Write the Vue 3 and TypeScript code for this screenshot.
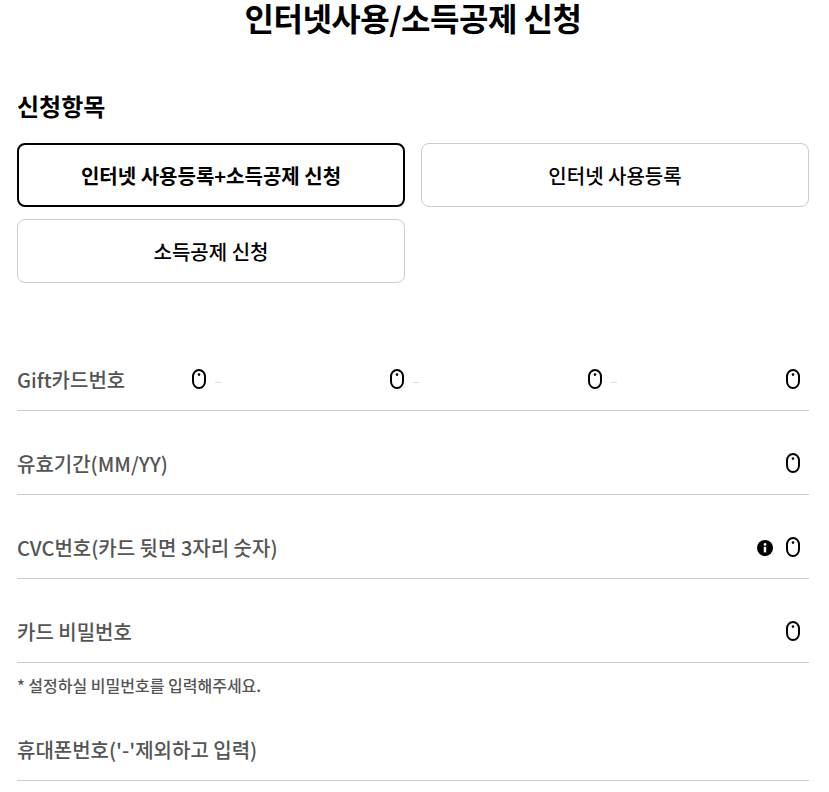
<script setup lang="ts">
const options = ['인터넷 사용등록+소득공제 신청', '인터넷 사용등록', '소득공제 신청']
</script>

<template>
  <main class="page">
    <h1 class="title">인터넷사용/소득공제 신청</h1>
    <h2 class="subtitle">신청항목</h2>
    <div class="options">
      <button v-for="(o, i) in options" :key="o" class="option" :class="{ active: i === 0 }">{{ o }}</button>
    </div>
    <section class="form">
      <div class="row">
        <span class="label">Gift카드번호</span>
        <div class="cells">
          <template v-for="n in 4" :key="n">
            <div class="cell">
              <svg class="dot-icon" viewBox="0 0 14 20" aria-hidden="true">
                <rect x="1" y="1" width="12" height="18" rx="6" ry="6.5" fill="none" stroke="#000" stroke-width="2" />
                <circle cx="7" cy="5.6" r="1.3" fill="#000" />
              </svg>
            </div>
            <span v-if="n < 4" class="dash"></span>
          </template>
        </div>
      </div>
      <div class="row">
        <span class="label">유효기간(MM/YY)</span>
        <svg class="dot-icon end" viewBox="0 0 14 20" aria-hidden="true">
          <rect x="1" y="1" width="12" height="18" rx="6" ry="6.5" fill="none" stroke="#000" stroke-width="2" />
          <circle cx="7" cy="5.6" r="1.3" fill="#000" />
        </svg>
      </div>
      <div class="row">
        <span class="label">CVC번호(카드 뒷면 3자리 숫자)</span>
        <svg class="info" viewBox="0 0 16 16" aria-hidden="true">
          <circle cx="8" cy="8" r="8" fill="#000" />
          <rect x="6.8" y="6.8" width="2.4" height="5.6" fill="#fff" />
          <circle cx="8" cy="4.4" r="1.4" fill="#fff" />
        </svg>
        <svg class="dot-icon" viewBox="0 0 14 20" aria-hidden="true">
          <rect x="1" y="1" width="12" height="18" rx="6" ry="6.5" fill="none" stroke="#000" stroke-width="2" />
          <circle cx="7" cy="5.6" r="1.3" fill="#000" />
        </svg>
      </div>
      <div class="row">
        <span class="label">카드 비밀번호</span>
        <svg class="dot-icon end" viewBox="0 0 14 20" aria-hidden="true">
          <rect x="1" y="1" width="12" height="18" rx="6" ry="6.5" fill="none" stroke="#000" stroke-width="2" />
          <circle cx="7" cy="5.6" r="1.3" fill="#000" />
        </svg>
      </div>
      <p class="note">* 설정하실 비밀번호를 입력해주세요.</p>
      <div class="row last">
        <span class="label">휴대폰번호('-'제외하고 입력)</span>
      </div>
    </section>
  </main>
</template>

<style>
html, body { background: #fff; }
</style>

<style scoped>
.page {
  box-sizing: border-box;
  width: 829px;
  height: 792px;
  overflow: hidden;
  padding: 0 20px 0 17px;
  font-family: "Noto Sans CJK KR", "Noto Sans", sans-serif;
  color: #000;
}
.title {
  margin: 0;
  height: 38px;
  padding-bottom: 4px;
  box-sizing: border-box;
  line-height: 34px;
  font-size: 32px;
  font-weight: 700;
  letter-spacing: -0.5px;
  text-align: center;
}
.subtitle {
  margin: 52px 0 0;
  height: 32px;
  line-height: 32px;
  font-size: 24px;
  font-weight: 700;
}
.options {
  display: grid;
  grid-template-columns: 1fr 1fr;
  gap: 12px 16px;
  margin-top: 21px;
}
.option {
  box-sizing: border-box;
  height: 64px;
  border: 1px solid #ccc;
  border-radius: 8px;
  background: #fff;
  font: 500 20px "Noto Sans CJK KR", sans-serif;
  color: #000;
}
.option.active {
  border: 2px solid #000;
  font-weight: 700;
}
.form { margin-top: 44px; }
.row {
  box-sizing: border-box;
  display: flex;
  align-items: center;
  height: 84px;
  padding-top: 26px;
  padding-bottom: 4px;
  border-bottom: 1px solid #ccc;
}
.label {
  flex: none;
  font-size: 20px;
  font-weight: 500;
  color: #555;
  line-height: 28px;
}
.cells {
  flex: 1;
  display: flex;
  align-items: center;
}
.cell {
  flex: none;
  width: 192px;
  display: flex;
  justify-content: flex-end;
  padding-right: 9px;
  box-sizing: border-box;
}
.cell:first-child { flex: 1; width: auto; }
.dot-icon {
  flex: none;
  width: 14px;
  height: 20px;
  margin-top: -1px;
}
.dot-icon.end { margin-left: auto; margin-right: 9px; }
.dash {
  flex: none;
  width: 6px;
  height: 1px;
  margin-top: 5px;
  background: #ddd;
}
.info {
  width: 16px;
  height: 16px;
  margin-top: 1px;
  margin-left: auto;
  margin-right: 13px;
}
.info + .dot-icon { margin-right: 9px; }
.note {
  margin: 12px 0 2px;
  font-size: 16px;
  font-weight: 500;
  line-height: 20px;
  color: #555;
}
</style>
